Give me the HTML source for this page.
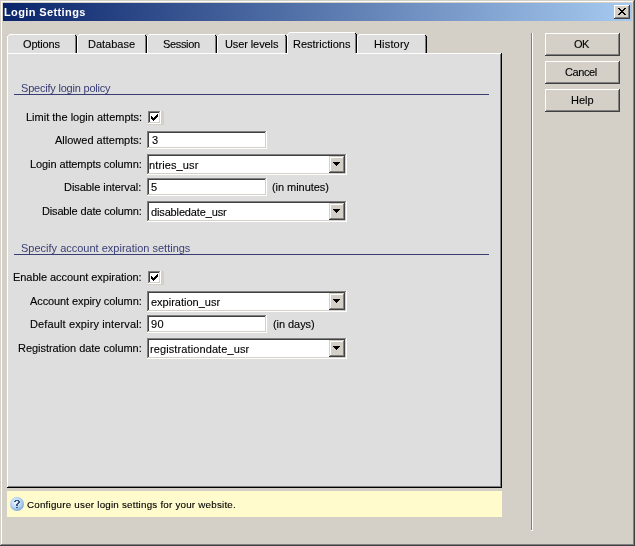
<!DOCTYPE html>
<html><head><meta charset="utf-8">
<style>
*{margin:0;padding:0;box-sizing:border-box}
html,body{width:635px;height:546px;overflow:hidden;background:#D4D0C8}
body{position:relative;font-family:"Liberation Sans",sans-serif;font-size:11px;color:#000}
.a{position:absolute}
.t{position:absolute;white-space:pre;line-height:13px;height:13px;will-change:transform;-webkit-text-stroke:0.12px currentColor}
.r{text-align:right}
.c{text-align:center}
</style></head><body>
<div class="a" style="left:0px;top:0px;width:635px;height:1px;background:#D4D0C8;"></div>
<div class="a" style="left:0px;top:0px;width:1px;height:546px;background:#D4D0C8;"></div>
<div class="a" style="left:634px;top:0px;width:1px;height:546px;background:#404040;"></div>
<div class="a" style="left:0px;top:545px;width:635px;height:1px;background:#404040;"></div>
<div class="a" style="left:1px;top:1px;width:633px;height:1px;background:#FFFFFF;"></div>
<div class="a" style="left:1px;top:1px;width:1px;height:544px;background:#FFFFFF;"></div>
<div class="a" style="left:633px;top:1px;width:1px;height:544px;background:#808080;"></div>
<div class="a" style="left:1px;top:544px;width:633px;height:1px;background:#808080;"></div>
<div class="a" style="left:3px;top:3px;width:629px;height:18px;background:linear-gradient(to right,#0A246A,#A6CAF0);"></div>
<div class="a" style="left:614px;top:5px;width:16px;height:14px;background:#D4D0C8;"></div>
<div class="a" style="left:614px;top:5px;width:15px;height:1px;background:#FFFFFF;"></div>
<div class="a" style="left:614px;top:5px;width:1px;height:13px;background:#FFFFFF;"></div>
<div class="a" style="left:629px;top:5px;width:1px;height:14px;background:#404040;"></div>
<div class="a" style="left:614px;top:18px;width:16px;height:1px;background:#404040;"></div>
<div class="a" style="left:628px;top:6px;width:1px;height:12px;background:#808080;"></div>
<div class="a" style="left:615px;top:17px;width:14px;height:1px;background:#808080;"></div>
<svg class="a" style="left:618px;top:8px" width="8" height="7" shape-rendering="crispEdges"><path fill="#000" d="M0 0h2v1h-2zM6 0h2v1h-2zM1 1h2v1h-2zM5 1h2v1h-2zM2 2h4v1h-4zM3 3h2v1h-2zM2 4h4v1h-4zM1 5h2v1h-2zM5 5h2v1h-2zM0 6h2v1h-2zM6 6h2v1h-2z"/></svg>
<div class="a" style="left:7px;top:53px;width:495px;height:435px;background:#DEDEDE;"></div>
<div class="a" style="left:7px;top:53px;width:494px;height:1px;background:#FFFFFF;"></div>
<div class="a" style="left:7px;top:53px;width:1px;height:434px;background:#FFFFFF;"></div>
<div class="a" style="left:501px;top:53px;width:1px;height:435px;background:#000;"></div>
<div class="a" style="left:7px;top:487px;width:495px;height:1px;background:#000;"></div>
<div class="a" style="left:500px;top:54px;width:1px;height:433px;background:#808080;"></div>
<div class="a" style="left:8px;top:486px;width:493px;height:1px;background:#808080;"></div>
<div class="a" style="left:8px;top:35px;width:68px;height:18px;background:#DEDEDE;"></div>
<div class="a" style="left:9px;top:34px;width:66px;height:1px;background:#FFFFFF;"></div>
<div class="a" style="left:8px;top:35px;width:1px;height:1px;background:#FFFFFF;"></div>
<div class="a" style="left:7px;top:36px;width:1px;height:17px;background:#FFFFFF;"></div>
<div class="a" style="left:75px;top:35px;width:1px;height:1px;background:#000;"></div>
<div class="a" style="left:76px;top:36px;width:1px;height:17px;background:#000;"></div>
<div class="a" style="left:75px;top:36px;width:1px;height:17px;background:#808080;"></div>
<div class="a" style="left:78px;top:35px;width:68px;height:18px;background:#DEDEDE;"></div>
<div class="a" style="left:79px;top:34px;width:66px;height:1px;background:#FFFFFF;"></div>
<div class="a" style="left:78px;top:35px;width:1px;height:1px;background:#FFFFFF;"></div>
<div class="a" style="left:77px;top:36px;width:1px;height:17px;background:#FFFFFF;"></div>
<div class="a" style="left:145px;top:35px;width:1px;height:1px;background:#000;"></div>
<div class="a" style="left:146px;top:36px;width:1px;height:17px;background:#000;"></div>
<div class="a" style="left:145px;top:36px;width:1px;height:17px;background:#808080;"></div>
<div class="a" style="left:148px;top:35px;width:68px;height:18px;background:#DEDEDE;"></div>
<div class="a" style="left:149px;top:34px;width:66px;height:1px;background:#FFFFFF;"></div>
<div class="a" style="left:148px;top:35px;width:1px;height:1px;background:#FFFFFF;"></div>
<div class="a" style="left:147px;top:36px;width:1px;height:17px;background:#FFFFFF;"></div>
<div class="a" style="left:215px;top:35px;width:1px;height:1px;background:#000;"></div>
<div class="a" style="left:216px;top:36px;width:1px;height:17px;background:#000;"></div>
<div class="a" style="left:215px;top:36px;width:1px;height:17px;background:#808080;"></div>
<div class="a" style="left:218px;top:35px;width:68px;height:18px;background:#DEDEDE;"></div>
<div class="a" style="left:219px;top:34px;width:66px;height:1px;background:#FFFFFF;"></div>
<div class="a" style="left:218px;top:35px;width:1px;height:1px;background:#FFFFFF;"></div>
<div class="a" style="left:217px;top:36px;width:1px;height:17px;background:#FFFFFF;"></div>
<div class="a" style="left:285px;top:35px;width:1px;height:1px;background:#000;"></div>
<div class="a" style="left:286px;top:36px;width:1px;height:17px;background:#000;"></div>
<div class="a" style="left:285px;top:36px;width:1px;height:17px;background:#808080;"></div>
<div class="a" style="left:288px;top:33px;width:68px;height:21px;background:#DEDEDE;"></div>
<div class="a" style="left:289px;top:32px;width:66px;height:1px;background:#FFFFFF;"></div>
<div class="a" style="left:288px;top:33px;width:1px;height:1px;background:#FFFFFF;"></div>
<div class="a" style="left:287px;top:34px;width:1px;height:20px;background:#FFFFFF;"></div>
<div class="a" style="left:355px;top:33px;width:1px;height:1px;background:#000;"></div>
<div class="a" style="left:356px;top:34px;width:1px;height:19px;background:#000;"></div>
<div class="a" style="left:355px;top:34px;width:1px;height:19px;background:#808080;"></div>
<div class="a" style="left:358px;top:35px;width:68px;height:18px;background:#DEDEDE;"></div>
<div class="a" style="left:359px;top:34px;width:66px;height:1px;background:#FFFFFF;"></div>
<div class="a" style="left:358px;top:35px;width:1px;height:1px;background:#FFFFFF;"></div>
<div class="a" style="left:357px;top:36px;width:1px;height:17px;background:#FFFFFF;"></div>
<div class="a" style="left:425px;top:35px;width:1px;height:1px;background:#000;"></div>
<div class="a" style="left:426px;top:36px;width:1px;height:17px;background:#000;"></div>
<div class="a" style="left:425px;top:36px;width:1px;height:17px;background:#808080;"></div>
<div class="a" style="left:288px;top:53px;width:67px;height:1px;background:#DEDEDE;"></div>
<div class="a" style="left:285px;top:53px;width:2px;height:1px;background:#FFFFFF;"></div>
<div class="a" style="left:531px;top:33px;width:1px;height:497px;background:#808080;"></div>
<div class="a" style="left:532px;top:33px;width:1px;height:498px;background:#FFFFFF;"></div>
<div class="a" style="left:531px;top:530px;width:1px;height:1px;background:#FFFFFF;"></div>
<div class="a" style="left:545px;top:33px;width:75px;height:23px;background:#D4D0C8;"></div>
<div class="a" style="left:545px;top:33px;width:74px;height:1px;background:#FFFFFF;"></div>
<div class="a" style="left:545px;top:33px;width:1px;height:22px;background:#FFFFFF;"></div>
<div class="a" style="left:619px;top:33px;width:1px;height:23px;background:#404040;"></div>
<div class="a" style="left:545px;top:55px;width:75px;height:1px;background:#404040;"></div>
<div class="a" style="left:618px;top:34px;width:1px;height:21px;background:#808080;"></div>
<div class="a" style="left:546px;top:54px;width:73px;height:1px;background:#808080;"></div>
<div class="a" style="left:545px;top:61px;width:75px;height:23px;background:#D4D0C8;"></div>
<div class="a" style="left:545px;top:61px;width:74px;height:1px;background:#FFFFFF;"></div>
<div class="a" style="left:545px;top:61px;width:1px;height:22px;background:#FFFFFF;"></div>
<div class="a" style="left:619px;top:61px;width:1px;height:23px;background:#404040;"></div>
<div class="a" style="left:545px;top:83px;width:75px;height:1px;background:#404040;"></div>
<div class="a" style="left:618px;top:62px;width:1px;height:21px;background:#808080;"></div>
<div class="a" style="left:546px;top:82px;width:73px;height:1px;background:#808080;"></div>
<div class="a" style="left:545px;top:89px;width:75px;height:23px;background:#D4D0C8;"></div>
<div class="a" style="left:545px;top:89px;width:74px;height:1px;background:#FFFFFF;"></div>
<div class="a" style="left:545px;top:89px;width:1px;height:22px;background:#FFFFFF;"></div>
<div class="a" style="left:619px;top:89px;width:1px;height:23px;background:#404040;"></div>
<div class="a" style="left:545px;top:111px;width:75px;height:1px;background:#404040;"></div>
<div class="a" style="left:618px;top:90px;width:1px;height:21px;background:#808080;"></div>
<div class="a" style="left:546px;top:110px;width:73px;height:1px;background:#808080;"></div>
<div class="a" style="left:14px;top:94px;width:475px;height:1px;background:#383E74;"></div>
<div class="a" style="left:14px;top:254px;width:475px;height:1px;background:#383E74;"></div>
<div class="a" style="left:148px;top:111px;width:13px;height:13px;background:#FFFFFF;"></div>
<div class="a" style="left:148px;top:111px;width:12px;height:1px;background:#808080;"></div>
<div class="a" style="left:148px;top:111px;width:1px;height:12px;background:#808080;"></div>
<div class="a" style="left:149px;top:112px;width:10px;height:1px;background:#404040;"></div>
<div class="a" style="left:149px;top:112px;width:1px;height:10px;background:#404040;"></div>
<div class="a" style="left:159px;top:112px;width:1px;height:11px;background:#D4D0C8;"></div>
<div class="a" style="left:149px;top:122px;width:11px;height:1px;background:#D4D0C8;"></div>
<div class="a" style="left:161px;top:111px;width:3px;height:14px;background:#D4D0C8;"></div>
<div class="a" style="left:148px;top:124px;width:13px;height:1px;background:#D4D0C8;"></div>
<svg class="a" style="left:151px;top:114px" width="7" height="7" shape-rendering="crispEdges"><path fill="#000" d="M6 0h1v1h-1zM5 1h2v1h-2zM0 2h1v1h-1zM4 2h3v1h-3zM0 3h2v1h-2zM3 3h3v1h-3zM0 4h5v1h-5zM1 5h3v1h-3zM2 6h1v1h-1z"/></svg>
<div class="a" style="left:147px;top:131px;width:120px;height:18px;background:#FFFFFF;"></div>
<div class="a" style="left:147px;top:131px;width:119px;height:1px;background:#808080;"></div>
<div class="a" style="left:147px;top:131px;width:1px;height:17px;background:#808080;"></div>
<div class="a" style="left:148px;top:132px;width:117px;height:1px;background:#404040;"></div>
<div class="a" style="left:148px;top:132px;width:1px;height:15px;background:#404040;"></div>
<div class="a" style="left:265px;top:132px;width:1px;height:16px;background:#D4D0C8;"></div>
<div class="a" style="left:148px;top:147px;width:118px;height:1px;background:#D4D0C8;"></div>
<div class="a" style="left:147px;top:154px;width:200px;height:21px;background:#FFFFFF;"></div>
<div class="a" style="left:147px;top:154px;width:199px;height:1px;background:#808080;"></div>
<div class="a" style="left:147px;top:154px;width:1px;height:20px;background:#808080;"></div>
<div class="a" style="left:148px;top:155px;width:197px;height:1px;background:#404040;"></div>
<div class="a" style="left:148px;top:155px;width:1px;height:18px;background:#404040;"></div>
<div class="a" style="left:345px;top:155px;width:1px;height:19px;background:#D4D0C8;"></div>
<div class="a" style="left:148px;top:173px;width:198px;height:1px;background:#D4D0C8;"></div>
<div class="a" style="left:329px;top:156px;width:16px;height:17px;background:#D4D0C8;"></div>
<div class="a" style="left:329px;top:156px;width:15px;height:1px;background:#D4D0C8;"></div>
<div class="a" style="left:329px;top:156px;width:1px;height:16px;background:#D4D0C8;"></div>
<div class="a" style="left:330px;top:157px;width:13px;height:1px;background:#FFFFFF;"></div>
<div class="a" style="left:330px;top:157px;width:1px;height:14px;background:#FFFFFF;"></div>
<div class="a" style="left:344px;top:156px;width:1px;height:17px;background:#404040;"></div>
<div class="a" style="left:329px;top:172px;width:16px;height:1px;background:#404040;"></div>
<div class="a" style="left:343px;top:157px;width:1px;height:15px;background:#808080;"></div>
<div class="a" style="left:330px;top:171px;width:14px;height:1px;background:#808080;"></div>
<svg class="a" style="left:333px;top:162px" width="7" height="4" shape-rendering="crispEdges"><path fill="#000" d="M0 0h7v1h-7zM1 1h5v1h-5zM2 2h3v1h-3zM3 3h1v1h-1z"/></svg>
<div class="a" style="left:147px;top:178px;width:120px;height:18px;background:#FFFFFF;"></div>
<div class="a" style="left:147px;top:178px;width:119px;height:1px;background:#808080;"></div>
<div class="a" style="left:147px;top:178px;width:1px;height:17px;background:#808080;"></div>
<div class="a" style="left:148px;top:179px;width:117px;height:1px;background:#404040;"></div>
<div class="a" style="left:148px;top:179px;width:1px;height:15px;background:#404040;"></div>
<div class="a" style="left:265px;top:179px;width:1px;height:16px;background:#D4D0C8;"></div>
<div class="a" style="left:148px;top:194px;width:118px;height:1px;background:#D4D0C8;"></div>
<div class="a" style="left:147px;top:201px;width:200px;height:21px;background:#FFFFFF;"></div>
<div class="a" style="left:147px;top:201px;width:199px;height:1px;background:#808080;"></div>
<div class="a" style="left:147px;top:201px;width:1px;height:20px;background:#808080;"></div>
<div class="a" style="left:148px;top:202px;width:197px;height:1px;background:#404040;"></div>
<div class="a" style="left:148px;top:202px;width:1px;height:18px;background:#404040;"></div>
<div class="a" style="left:345px;top:202px;width:1px;height:19px;background:#D4D0C8;"></div>
<div class="a" style="left:148px;top:220px;width:198px;height:1px;background:#D4D0C8;"></div>
<div class="a" style="left:329px;top:203px;width:16px;height:17px;background:#D4D0C8;"></div>
<div class="a" style="left:329px;top:203px;width:15px;height:1px;background:#D4D0C8;"></div>
<div class="a" style="left:329px;top:203px;width:1px;height:16px;background:#D4D0C8;"></div>
<div class="a" style="left:330px;top:204px;width:13px;height:1px;background:#FFFFFF;"></div>
<div class="a" style="left:330px;top:204px;width:1px;height:14px;background:#FFFFFF;"></div>
<div class="a" style="left:344px;top:203px;width:1px;height:17px;background:#404040;"></div>
<div class="a" style="left:329px;top:219px;width:16px;height:1px;background:#404040;"></div>
<div class="a" style="left:343px;top:204px;width:1px;height:15px;background:#808080;"></div>
<div class="a" style="left:330px;top:218px;width:14px;height:1px;background:#808080;"></div>
<svg class="a" style="left:333px;top:209px" width="7" height="4" shape-rendering="crispEdges"><path fill="#000" d="M0 0h7v1h-7zM1 1h5v1h-5zM2 2h3v1h-3zM3 3h1v1h-1z"/></svg>
<div class="a" style="left:148px;top:271px;width:13px;height:13px;background:#FFFFFF;"></div>
<div class="a" style="left:148px;top:271px;width:12px;height:1px;background:#808080;"></div>
<div class="a" style="left:148px;top:271px;width:1px;height:12px;background:#808080;"></div>
<div class="a" style="left:149px;top:272px;width:10px;height:1px;background:#404040;"></div>
<div class="a" style="left:149px;top:272px;width:1px;height:10px;background:#404040;"></div>
<div class="a" style="left:159px;top:272px;width:1px;height:11px;background:#D4D0C8;"></div>
<div class="a" style="left:149px;top:282px;width:11px;height:1px;background:#D4D0C8;"></div>
<div class="a" style="left:161px;top:271px;width:3px;height:14px;background:#D4D0C8;"></div>
<div class="a" style="left:148px;top:284px;width:13px;height:1px;background:#D4D0C8;"></div>
<svg class="a" style="left:151px;top:274px" width="7" height="7" shape-rendering="crispEdges"><path fill="#000" d="M6 0h1v1h-1zM5 1h2v1h-2zM0 2h1v1h-1zM4 2h3v1h-3zM0 3h2v1h-2zM3 3h3v1h-3zM0 4h5v1h-5zM1 5h3v1h-3zM2 6h1v1h-1z"/></svg>
<div class="a" style="left:147px;top:291px;width:200px;height:21px;background:#FFFFFF;"></div>
<div class="a" style="left:147px;top:291px;width:199px;height:1px;background:#808080;"></div>
<div class="a" style="left:147px;top:291px;width:1px;height:20px;background:#808080;"></div>
<div class="a" style="left:148px;top:292px;width:197px;height:1px;background:#404040;"></div>
<div class="a" style="left:148px;top:292px;width:1px;height:18px;background:#404040;"></div>
<div class="a" style="left:345px;top:292px;width:1px;height:19px;background:#D4D0C8;"></div>
<div class="a" style="left:148px;top:310px;width:198px;height:1px;background:#D4D0C8;"></div>
<div class="a" style="left:329px;top:293px;width:16px;height:17px;background:#D4D0C8;"></div>
<div class="a" style="left:329px;top:293px;width:15px;height:1px;background:#D4D0C8;"></div>
<div class="a" style="left:329px;top:293px;width:1px;height:16px;background:#D4D0C8;"></div>
<div class="a" style="left:330px;top:294px;width:13px;height:1px;background:#FFFFFF;"></div>
<div class="a" style="left:330px;top:294px;width:1px;height:14px;background:#FFFFFF;"></div>
<div class="a" style="left:344px;top:293px;width:1px;height:17px;background:#404040;"></div>
<div class="a" style="left:329px;top:309px;width:16px;height:1px;background:#404040;"></div>
<div class="a" style="left:343px;top:294px;width:1px;height:15px;background:#808080;"></div>
<div class="a" style="left:330px;top:308px;width:14px;height:1px;background:#808080;"></div>
<svg class="a" style="left:333px;top:299px" width="7" height="4" shape-rendering="crispEdges"><path fill="#000" d="M0 0h7v1h-7zM1 1h5v1h-5zM2 2h3v1h-3zM3 3h1v1h-1z"/></svg>
<div class="a" style="left:147px;top:315px;width:120px;height:18px;background:#FFFFFF;"></div>
<div class="a" style="left:147px;top:315px;width:119px;height:1px;background:#808080;"></div>
<div class="a" style="left:147px;top:315px;width:1px;height:17px;background:#808080;"></div>
<div class="a" style="left:148px;top:316px;width:117px;height:1px;background:#404040;"></div>
<div class="a" style="left:148px;top:316px;width:1px;height:15px;background:#404040;"></div>
<div class="a" style="left:265px;top:316px;width:1px;height:16px;background:#D4D0C8;"></div>
<div class="a" style="left:148px;top:331px;width:118px;height:1px;background:#D4D0C8;"></div>
<div class="a" style="left:147px;top:338px;width:200px;height:21px;background:#FFFFFF;"></div>
<div class="a" style="left:147px;top:338px;width:199px;height:1px;background:#808080;"></div>
<div class="a" style="left:147px;top:338px;width:1px;height:20px;background:#808080;"></div>
<div class="a" style="left:148px;top:339px;width:197px;height:1px;background:#404040;"></div>
<div class="a" style="left:148px;top:339px;width:1px;height:18px;background:#404040;"></div>
<div class="a" style="left:345px;top:339px;width:1px;height:19px;background:#D4D0C8;"></div>
<div class="a" style="left:148px;top:357px;width:198px;height:1px;background:#D4D0C8;"></div>
<div class="a" style="left:329px;top:340px;width:16px;height:17px;background:#D4D0C8;"></div>
<div class="a" style="left:329px;top:340px;width:15px;height:1px;background:#D4D0C8;"></div>
<div class="a" style="left:329px;top:340px;width:1px;height:16px;background:#D4D0C8;"></div>
<div class="a" style="left:330px;top:341px;width:13px;height:1px;background:#FFFFFF;"></div>
<div class="a" style="left:330px;top:341px;width:1px;height:14px;background:#FFFFFF;"></div>
<div class="a" style="left:344px;top:340px;width:1px;height:17px;background:#404040;"></div>
<div class="a" style="left:329px;top:356px;width:16px;height:1px;background:#404040;"></div>
<div class="a" style="left:343px;top:341px;width:1px;height:15px;background:#808080;"></div>
<div class="a" style="left:330px;top:355px;width:14px;height:1px;background:#808080;"></div>
<svg class="a" style="left:333px;top:346px" width="7" height="4" shape-rendering="crispEdges"><path fill="#000" d="M0 0h7v1h-7zM1 1h5v1h-5zM2 2h3v1h-3zM3 3h1v1h-1z"/></svg>
<div class="a" style="left:7px;top:491px;width:495px;height:26px;background:#FFFBCC;"></div>
<svg class="a" style="left:10px;top:497px" width="14" height="14">
<defs><radialGradient id="hg" cx="0.42" cy="0.4" r="0.62"><stop offset="0" stop-color="#F2F8FE"/><stop offset="0.55" stop-color="#BCD8F4"/><stop offset="1" stop-color="#7FAADB"/></radialGradient></defs>
<circle cx="7" cy="7" r="7" fill="url(#hg)"/>
<path fill="#3A5680" shape-rendering="crispEdges" d="M5 3h4v1h-4zM4 4h2v1h-2zM8 4h2v1h-2zM8 5h2v1h-2zM7 6h2v1h-2zM6 7h2v2h-2zM6 10h2v1h-2z"/>
</svg>
<div class="t" style="left:4px;top:6px;letter-spacing:0.385px;font-weight:bold;color:#fff;-webkit-text-stroke:0;">Login Settings</div>
<div class="t" style="left:23px;top:38px;letter-spacing:-0.167px;">Options</div>
<div class="t" style="left:88px;top:38px;">Database</div>
<div class="t" style="left:163px;top:38px;letter-spacing:-0.333px;">Session</div>
<div class="t" style="left:225px;top:38px;letter-spacing:-0.1px;">User levels</div>
<div class="t" style="left:293px;top:38px;">Restrictions</div>
<div class="t" style="left:374px;top:38px;letter-spacing:0.167px;">History</div>
<div class="t" style="left:21px;top:82px;letter-spacing:-0.211px;color:#383E74;-webkit-text-stroke:0;">Specify login policy</div>
<div class="t" style="left:21px;top:242px;color:#383E74;-webkit-text-stroke:0;">Specify account expiration settings</div>
<div class="t" style="left:26px;top:111px;">Limit the login attempts:</div>
<div class="t" style="left:55px;top:134px;">Allowed attempts:</div>
<div class="t" style="left:30px;top:158px;letter-spacing:-0.095px;">Login attempts column:</div>
<div class="t" style="left:64px;top:181px;letter-spacing:-0.062px;">Disable interval:</div>
<div class="t" style="left:42px;top:205px;letter-spacing:-0.158px;">Disable date column:</div>
<div class="t" style="left:13px;top:271px;letter-spacing:-0.04px;">Enable account expiration:</div>
<div class="t" style="left:30px;top:295px;letter-spacing:-0.095px;">Account expiry column:</div>
<div class="t" style="left:30px;top:318px;letter-spacing:0.13px;">Default expiry interval:</div>
<div class="t" style="left:18px;top:342px;letter-spacing:-0.042px;">Registration date column:</div>
<div class="t" style="left:152px;top:134px;">3</div>
<div class="t" style="left:149px;top:159px;letter-spacing:0.111px;">ntries_usr</div>
<div class="t" style="left:151px;top:181px;">5</div>
<div class="t" style="left:151px;top:206px;letter-spacing:-0.143px;">disabledate_usr</div>
<div class="t" style="left:151px;top:296px;">expiration_usr</div>
<div class="t" style="left:151px;top:318px;letter-spacing:0.5px;">90</div>
<div class="t" style="left:150px;top:343px;letter-spacing:0.105px;">registrationdate_usr</div>
<div class="t" style="left:272px;top:181px;letter-spacing:-0.045px;">(in minutes)</div>
<div class="t" style="left:273px;top:318px;letter-spacing:-0.062px;">(in days)</div>
<div class="t" style="left:574px;top:38px;letter-spacing:-0.5px;">OK</div>
<div class="t" style="left:565px;top:66px;letter-spacing:-0.4px;">Cancel</div>
<div class="t" style="left:571px;top:94px;">Help</div>
<div class="t" style="left:27px;top:498px;letter-spacing:0.217px;font-size:9.8px;">Configure user login settings for your website.</div>
</body></html>
